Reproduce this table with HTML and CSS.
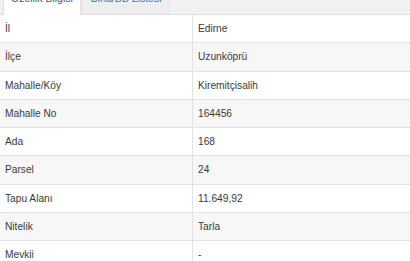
FILE: index.html
```html
<!DOCTYPE html>
<html lang="tr">
<head>
<meta charset="utf-8">
<title>Özellik Bilgisi</title>
<link rel="stylesheet" href="styles.css">
</head>
<body>
<div class="panel">
  <ul class="tabs">
    <li class="tab active">Özellik Bilgisi</li>
    <li class="tab link">Bina/BB Listesi</li>
  </ul>
  <table class="info">
    <tbody>
      <tr><td class="key">İl</td><td>Edirne</td></tr>
      <tr><td class="key">İlçe</td><td>Uzunköprü</td></tr>
      <tr><td class="key">Mahalle/Köy</td><td>Kiremitçisalih</td></tr>
      <tr><td class="key">Mahalle No</td><td>164456</td></tr>
      <tr><td class="key">Ada</td><td>168</td></tr>
      <tr><td class="key">Parsel</td><td>24</td></tr>
      <tr><td class="key">Tapu Alanı</td><td>11.649,92</td></tr>
      <tr><td class="key">Nitelik</td><td>Tarla</td></tr>
      <tr><td class="key">Mevkii</td><td>-</td></tr>
    </tbody>
  </table>
</div>
</body>
</html>
```
FILE: styles.css
```css
html, body {
  margin: 0;
  padding: 0;
  background: #ffffff;
}
body {
  font-family: "Liberation Sans", Arial, sans-serif;
  font-size: 10.2px;
  color: #3a3a3a;
}
.panel {
  width: 410px;
}
.tabs {
  list-style: none;
  margin: -18px 0 0 0;
  padding: 0 0 0 3px;
  display: flex;
  background: #f1f1f1;
  border-bottom: 1px solid #dddddd;
}
.tab {
  line-height: 15px;
  padding: 8px 8px;
  font-size: 10.5px;
  border: 1px solid transparent;
  margin-bottom: -1px;
}
.tab.active {
  padding: 8px 7px;
  background: #ffffff;
  color: #555555;
  border-color: #dddddd;
  border-bottom-color: #ffffff;
}
.tab.link {
  color: #337ab7;
  background: #eeeeee;
  border-color: #e2e2e2;
  border-bottom-color: #dddddd;
  margin-left: 1px;
}
.info {
  width: 100%;
  border-collapse: collapse;
}
.info td {
  padding: 6px 5px;
  line-height: 15.25px;
  border-top: 1px solid #e2e2e2;
  vertical-align: top;
}
.info tr:first-child td {
  border-top: none;
}
.info td.key {
  width: 182px;
  border-right: 1px solid #e2e2e2;
}
.info tr:nth-child(even) td {
  background: #f7f7f7;
}
```
